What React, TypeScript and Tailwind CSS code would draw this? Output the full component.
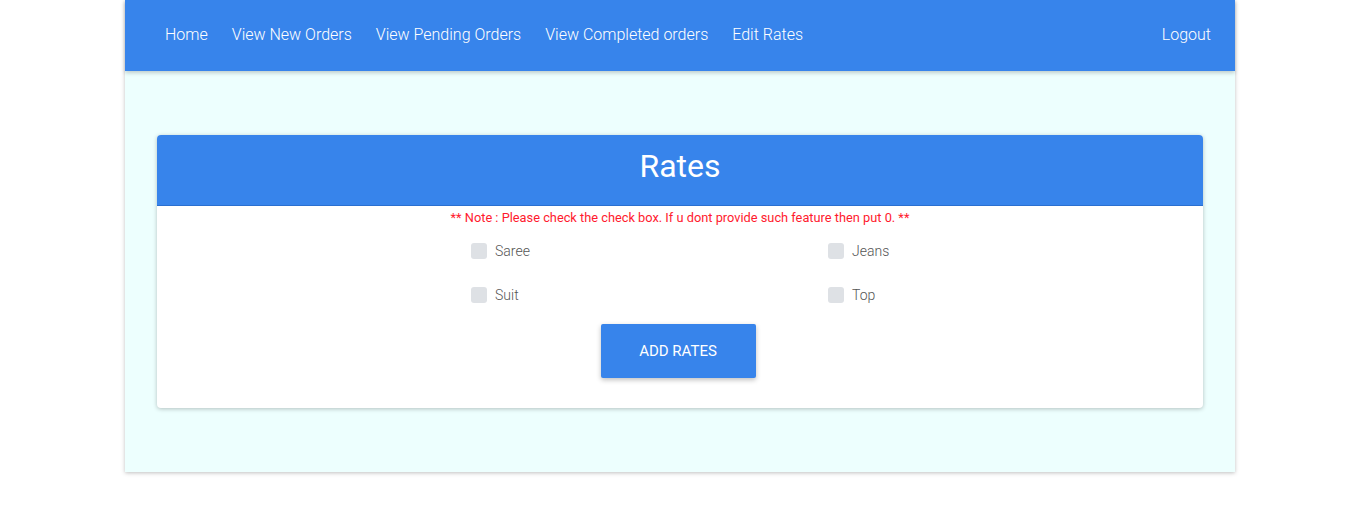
import { useState } from "react";

const links = ["Home", "View New Orders", "View Pending Orders", "View Completed orders", "Edit Rates"];

function Check({ label }: { label: string }) {
  const [on, setOn] = useState(false);
  return (
    <label className="flex items-center gap-[8px] h-[16px] cursor-pointer">
      <span
        onClick={() => setOn(!on)}
        className={`w-[16px] h-[16px] rounded-[3px] ${on ? "bg-[#3784eb]" : "bg-[#dee1e5]"}`}
      />
      <span className="text-[14px] font-light text-[#555]">{label}</span>
    </label>
  );
}

export default function App() {
  return (
    <div className="min-h-[531px] bg-white font-['Roboto',sans-serif]">
      <div className="mx-auto w-[1110px] h-[472px] bg-[#edfffe] shadow-[0_1px_4px_rgba(0,0,0,0.25)] flex flex-col">
        {/* navbar */}
        <nav className="h-[71px] bg-[#3784eb] shadow-[0_2px_4px_rgba(0,0,0,0.2)] flex items-center justify-between pl-[40px] pr-[24px] pb-[2px] text-white text-[16px] font-light">
          <div className="flex gap-[24px]">
            {links.map((l) => (
              <a key={l} href="#" className="hover:underline">
                {l}
              </a>
            ))}
          </div>
          <a href="#">Logout</a>
        </nav>

        <div className="px-[32px] pt-[64px]">
          <div className="bg-white rounded-[4px] shadow-[0_1px_4px_rgba(0,0,0,0.25)] overflow-hidden">
            <div className="h-[71px] bg-[#3784eb] border-b border-[#2a6fd0] flex items-center justify-center pb-[8px]">
              <h1 className="text-white text-[32px] leading-[38px]">Rates</h1>
            </div>
            <p className="text-center text-[12.8px] text-[#ff1a2e] mt-[4px] leading-[16px]">
              ** Note : Please check the check box. If u dont provide such feature then put 0. **
            </p>
            <div className="pl-[314px] mt-[17px] grid grid-cols-[357px_357px] gap-y-[28px]">
              <Check label="Saree" />
              <Check label="Jeans" />
              <Check label="Suit" />
              <Check label="Top" />
            </div>
            <div className="flex justify-center mt-[21px] pb-[30px] pr-[4px]">
              <button className="w-[155px] h-[54px] bg-[#3784eb] text-white text-[15px] font-normal rounded-[2px] shadow-[0_2px_5px_rgba(0,0,0,0.25)]">
                ADD RATES
              </button>
            </div>
          </div>
        </div>
      </div>
    </div>
  );
}
